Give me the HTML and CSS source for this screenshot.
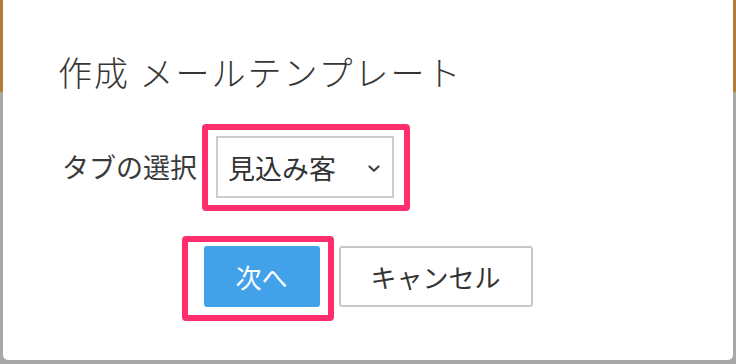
FILE: index.html
```html
<!DOCTYPE html>
<html lang="ja">
<head>
<meta charset="utf-8">
<link rel="stylesheet" href="styles.css">
</head>
<body>
<div class="modal">
  <h1 class="title">作成 メールテンプレート</h1>
  <div class="row">
    <span class="label">タブの選択</span>
    <div class="select-wrap">
      <div class="select">
        <span class="select-text">見込み客</span>
        <svg class="chev" width="14" height="8" viewBox="0 0 14 8"><path d="M2.5 1.5 L7 5.8 L11.5 1.5" fill="none" stroke="#444" stroke-width="2.2" stroke-linecap="round" stroke-linejoin="round"/></svg>
      </div>
      <div class="hl hl-select"></div>
    </div>
  </div>
  <div class="actions">
    <div class="btn-wrap">
      <button class="btn btn-primary">次へ</button>
      <div class="hl hl-btn"></div>
    </div>
    <button class="btn btn-default">キャンセル</button>
  </div>
</div>
</body>
</html>
```
FILE: styles.css
```css
html, body {
  margin: 0;
  padding: 0;
}
body {
  width: 736px;
  height: 364px;
  overflow: hidden;
  background: linear-gradient(to bottom, #b47c37 0, #b47c37 92px, #a8a8a8 92px, #a8a8a8 100%);
  font-family: "Noto Sans CJK JP", "Noto Sans", sans-serif;
  color: #333;
}
.modal {
  margin: 0 3px;
  height: 360px;
  background: #fff;
  border-radius: 0 0 5px 5px;
  box-sizing: border-box;
  padding-top: 50px;
}
.title {
  margin: 0 0 0 55px;
  font-size: 34px;
  font-weight: 300;
  line-height: 44px;
  color: #363636;
  letter-spacing: 2px;
}
.row {
  display: flex;
  align-items: center;
  gap: 19px;
  margin-top: 42px;
  padding-left: 59px;
}
.label {
  font-size: 27px;
  line-height: 40px;
  color: #3a3a3a;
}
.select-wrap {
  position: relative;
}
.select {
  width: 178px;
  height: 62px;
  box-sizing: border-box;
  border: 2px solid #cccccc;
  display: flex;
  align-items: center;
  justify-content: space-between;
  padding: 0 11px 0 10px;
}
.select-text {
  font-size: 27px;
  color: #333;
}
.chev {
  display: block;
  margin-top: 3px;
}
.hl {
  position: absolute;
  border: 6px solid #ff2f6d;
  border-radius: 4px;
}
.hl-select {
  left: -14px;
  right: -16px;
  top: -12px;
  bottom: -13px;
}
.actions {
  display: flex;
  justify-content: center;
  gap: 19px;
  margin-top: 48px;
}
.btn-wrap {
  position: relative;
}
.btn {
  height: 61px;
  box-sizing: border-box;
  padding: 0;
  font-family: inherit;
  font-size: 26px;
  border-radius: 3px;
  display: block;
  white-space: nowrap;
  text-align: center;
}
.btn-primary {
  width: 116px;
  background: #42a2e9;
  border: none;
  color: #fff;
}
.btn-default {
  width: 194px;
  background: #fff;
  border: 2px solid #c8c8c8;
  color: #333;
}
.hl-btn {
  left: -22px;
  right: -14px;
  top: -10px;
  bottom: -14px;
}
```
